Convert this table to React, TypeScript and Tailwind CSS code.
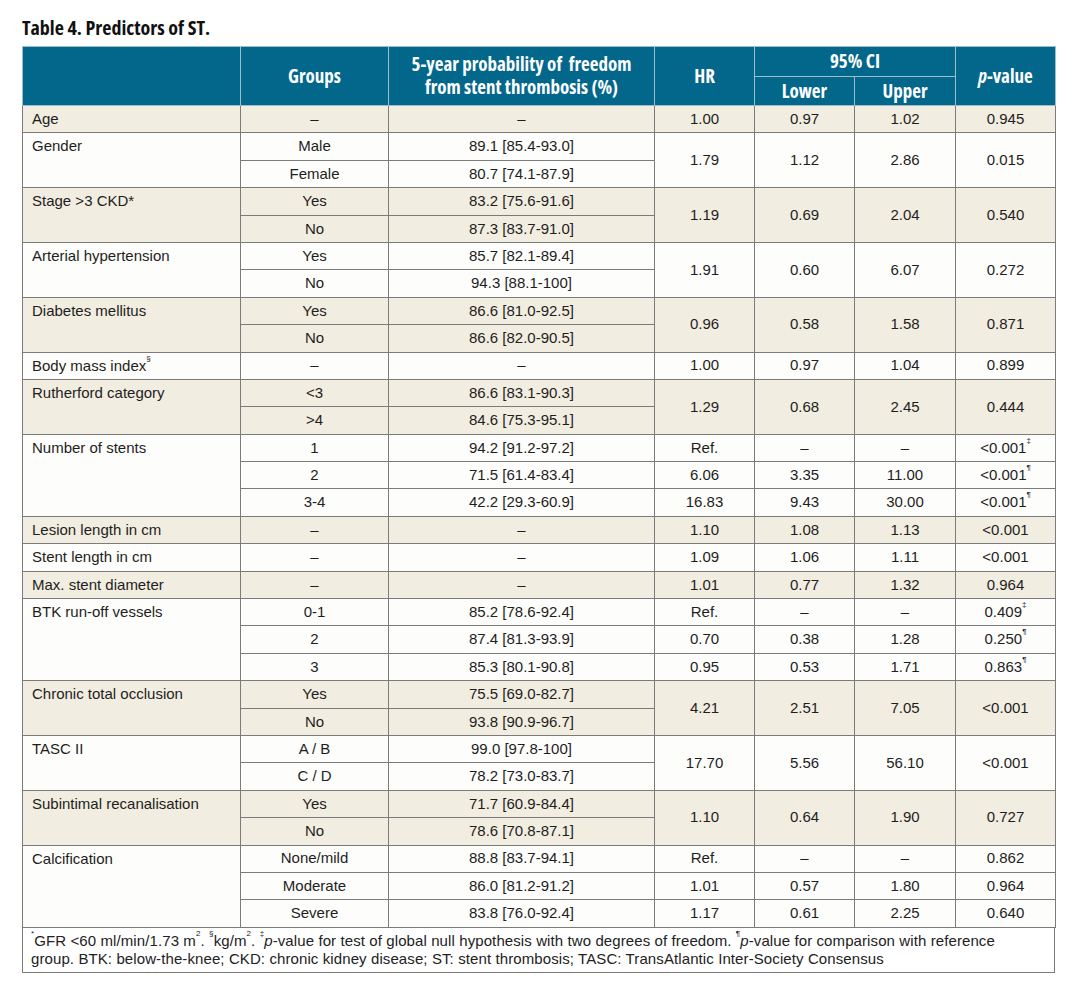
type Row = { g: string; prob: string; hr?: string; lo?: string; up?: string; p?: string; sup?: string };
type Group = { label: string; labelSup?: string; rows: Row[]; hr?: string; lo?: string; up?: string; p?: string };

const groups: Group[] = [
  { label: "Age", rows: [{ g: "–", prob: "–" }], hr: "1.00", lo: "0.97", up: "1.02", p: "0.945" },
  { label: "Gender", rows: [{ g: "Male", prob: "89.1 [85.4-93.0]" }, { g: "Female", prob: "80.7 [74.1-87.9]" }], hr: "1.79", lo: "1.12", up: "2.86", p: "0.015" },
  { label: "Stage >3 CKD*", rows: [{ g: "Yes", prob: "83.2 [75.6-91.6]" }, { g: "No", prob: "87.3 [83.7-91.0]" }], hr: "1.19", lo: "0.69", up: "2.04", p: "0.540" },
  { label: "Arterial hypertension", rows: [{ g: "Yes", prob: "85.7 [82.1-89.4]" }, { g: "No", prob: "94.3 [88.1-100]" }], hr: "1.91", lo: "0.60", up: "6.07", p: "0.272" },
  { label: "Diabetes mellitus", rows: [{ g: "Yes", prob: "86.6 [81.0-92.5]" }, { g: "No", prob: "86.6 [82.0-90.5]" }], hr: "0.96", lo: "0.58", up: "1.58", p: "0.871" },
  { label: "Body mass index", labelSup: "§", rows: [{ g: "–", prob: "–" }], hr: "1.00", lo: "0.97", up: "1.04", p: "0.899" },
  { label: "Rutherford category", rows: [{ g: "<3", prob: "86.6 [83.1-90.3]" }, { g: ">4", prob: "84.6 [75.3-95.1]" }], hr: "1.29", lo: "0.68", up: "2.45", p: "0.444" },
  {
    label: "Number of stents",
    rows: [
      { g: "1", prob: "94.2 [91.2-97.2]", hr: "Ref.", lo: "–", up: "–", p: "<0.001", sup: "‡" },
      { g: "2", prob: "71.5 [61.4-83.4]", hr: "6.06", lo: "3.35", up: "11.00", p: "<0.001", sup: "¶" },
      { g: "3-4", prob: "42.2 [29.3-60.9]", hr: "16.83", lo: "9.43", up: "30.00", p: "<0.001", sup: "¶" },
    ],
  },
  { label: "Lesion length in cm", rows: [{ g: "–", prob: "–" }], hr: "1.10", lo: "1.08", up: "1.13", p: "<0.001" },
  { label: "Stent length in cm", rows: [{ g: "–", prob: "–" }], hr: "1.09", lo: "1.06", up: "1.11", p: "<0.001" },
  { label: "Max. stent diameter", rows: [{ g: "–", prob: "–" }], hr: "1.01", lo: "0.77", up: "1.32", p: "0.964" },
  {
    label: "BTK run-off vessels",
    rows: [
      { g: "0-1", prob: "85.2 [78.6-92.4]", hr: "Ref.", lo: "–", up: "–", p: "0.409", sup: "‡" },
      { g: "2", prob: "87.4 [81.3-93.9]", hr: "0.70", lo: "0.38", up: "1.28", p: "0.250", sup: "¶" },
      { g: "3", prob: "85.3 [80.1-90.8]", hr: "0.95", lo: "0.53", up: "1.71", p: "0.863", sup: "¶" },
    ],
  },
  { label: "Chronic total occlusion", rows: [{ g: "Yes", prob: "75.5 [69.0-82.7]" }, { g: "No", prob: "93.8 [90.9-96.7]" }], hr: "4.21", lo: "2.51", up: "7.05", p: "<0.001" },
  { label: "TASC II", rows: [{ g: "A / B", prob: "99.0 [97.8-100]" }, { g: "C / D", prob: "78.2 [73.0-83.7]" }], hr: "17.70", lo: "5.56", up: "56.10", p: "<0.001" },
  { label: "Subintimal recanalisation", rows: [{ g: "Yes", prob: "71.7 [60.9-84.4]" }, { g: "No", prob: "78.6 [70.8-87.1]" }], hr: "1.10", lo: "0.64", up: "1.90", p: "0.727" },
  {
    label: "Calcification",
    rows: [
      { g: "None/mild", prob: "88.8 [83.7-94.1]", hr: "Ref.", lo: "–", up: "–", p: "0.862" },
      { g: "Moderate", prob: "86.0 [81.2-91.2]", hr: "1.01", lo: "0.57", up: "1.80", p: "0.964" },
      { g: "Severe", prob: "83.8 [76.0-92.4]", hr: "1.17", lo: "0.61", up: "2.25", p: "0.640" },
    ],
  },
];

const condensed = { fontFamily: "'Open Sans', 'DejaVu Sans Condensed', sans-serif", fontStretch: "75%" };
const cell = "border border-[#7b7b7b] text-center align-middle";
const th = "border border-[#9dbdcb] text-white font-bold text-center align-middle whitespace-nowrap";
const sup = "text-[8px] align-[6px]";

export default function App() {
  return (
    <div className="bg-white min-h-[992px] pl-[22px] pt-[15px] text-[#1e1e1e]" style={{ fontFamily: "'Liberation Sans', Arial, sans-serif" }}>
      <h1 className="text-[20px] font-bold leading-[25px] text-[#111] mb-[6px]" style={condensed}>
        Table 4. Predictors of ST.
      </h1>
      <table className="border-collapse w-[1033px] table-fixed text-[15px]">
        <colgroup>
          <col className="w-[218px]" />
          <col className="w-[148px]" />
          <col className="w-[266px]" />
          <col className="w-[100px]" />
          <col className="w-[100px]" />
          <col className="w-[101px]" />
          <col className="w-[100px]" />
        </colgroup>
        <thead className="bg-[#03678b] text-[19px]" style={condensed}>
          <tr className="h-[28px]">
            <th rowSpan={2} className={th} />
            <th rowSpan={2} className={th}>Groups</th>
            <th rowSpan={2} className={`${th} leading-[23px]`}>
              <div>5-year probability of&nbsp; freedom</div>
              <div>from stent thrombosis (%)</div>
            </th>
            <th rowSpan={2} className={th}>HR</th>
            <th colSpan={2} className={th}>95% CI</th>
            <th rowSpan={2} className={th}>
              <i>p</i>-value
            </th>
          </tr>
          <tr className="h-[29px]">
            <th className={th}>Lower</th>
            <th className={th}>Upper</th>
          </tr>
        </thead>
        <tbody>
          {groups.map((grp, gi) => {
            const bg = gi % 2 === 0 ? "bg-[#f1ede0]" : "bg-[#fdfdfb]";
            const n = grp.rows.length;
            return grp.rows.map((r, ri) => (
              <tr key={`${gi}-${ri}`} className={`h-[27.4px] ${bg}`}>
                {ri === 0 && (
                  <td rowSpan={n} className="border border-[#7b7b7b] text-left align-top pl-[9px] leading-[26px]">
                    {grp.label}
                    {grp.labelSup && <sup className={sup}>{grp.labelSup}</sup>}
                  </td>
                )}
                <td className={cell}>{r.g}</td>
                <td className={cell}>{r.prob}</td>
                {grp.hr !== undefined ? (
                  ri === 0 && (
                    <>
                      <td rowSpan={n} className={cell}>{grp.hr}</td>
                      <td rowSpan={n} className={cell}>{grp.lo}</td>
                      <td rowSpan={n} className={cell}>{grp.up}</td>
                      <td rowSpan={n} className={cell}>{grp.p}</td>
                    </>
                  )
                ) : (
                  <>
                    <td className={cell}>{r.hr}</td>
                    <td className={cell}>{r.lo}</td>
                    <td className={cell}>{r.up}</td>
                    <td className={cell}>
                      {r.p}
                      {r.sup && <sup className={sup}>{r.sup}</sup>}
                    </td>
                  </>
                )}
              </tr>
            ));
          })}
        </tbody>
      </table>
      <div className="w-[1033px] border-x border-b border-[#7b7b7b] px-[8px] pt-[4px] pb-[4px] text-[15px] tracking-[0.1px] leading-[18px] text-[#222]">
        <div className="whitespace-nowrap">
          <sup className={sup}>*</sup>GFR &lt;60 ml/min/1.73 m<sup className={sup}>2</sup>. <sup className={sup}>§</sup>kg/m
          <sup className={sup}>2</sup>. <sup className={sup}>‡</sup>
          <i>p</i>-value for test of global null hypothesis with two degrees of freedom. <sup className={sup}>¶</sup>
          <i>p</i>-value for comparison with reference
        </div>
        <div className="whitespace-nowrap">
          group. BTK: below-the-knee; CKD: chronic kidney disease; ST: stent thrombosis; TASC: TransAtlantic Inter-Society Consensus
        </div>
      </div>
    </div>
  );
}
